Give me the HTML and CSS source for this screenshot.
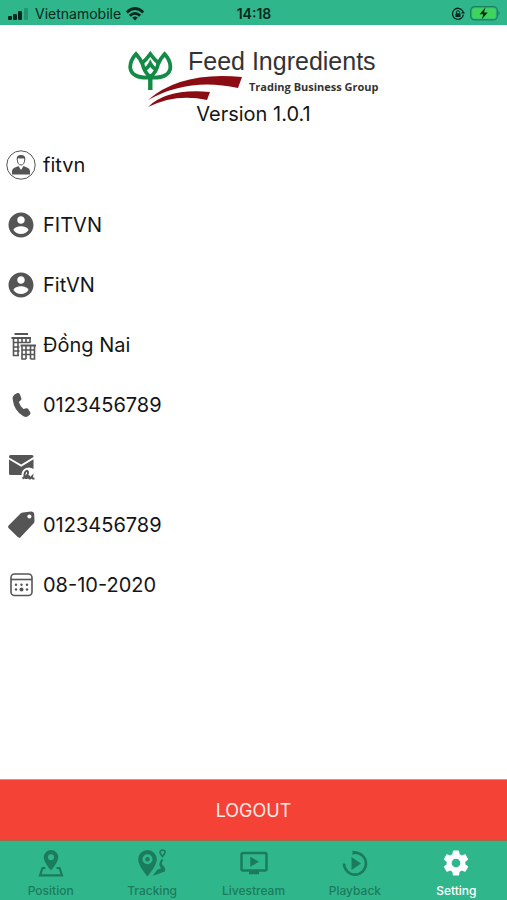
FILE: index.html
```html
<!DOCTYPE html>
<html lang="en">
<head>
  <meta charset="UTF-8" />
  <meta name="viewport" content="width=device-width, initial-scale=1.0"/>
  <title>Setting</title>
  <link rel="stylesheet" href="styles.css">
</head>
<body>

  <!-- Status bar -->
  <header class="status-bar">
    <div class="status-left">
      <svg width="22" height="12" viewBox="0 0 22 12">
        <rect x="0" y="8" width="4" height="4" rx="1"/>
        <rect x="5" y="6" width="4" height="6" rx="1"/>
        <rect x="10" y="3" width="4" height="9" rx="1"/>
        <rect x="16" y="0" width="4" height="12" rx="1" opacity="0.25"/>
      </svg>
      <span>Vietnamobile</span>
      <svg width="18" height="14" viewBox="0 0 18 14">
        <g fill="none" stroke="currentColor" stroke-width="2.8">
          <path d="M0.8 5.4Q9-2.4 17.2 5.4"/>
          <path d="M3.8 8.8Q9 4 14.2 8.8"/>
        </g>
        <path d="M9 13.5L6.2 10.6Q9 8.4 11.8 10.6Z"/>
      </svg>
    </div>
    <time class="clock">14:18</time>
    <div class="status-right">
      <svg width="14" height="14" viewBox="0 0 14 14">
        <path d="M11.6 3.8A5.5 5.5 0 1 0 12.4 7.6" fill="none" stroke="currentColor" stroke-width="1.3"/>
        <path d="M10 6.6h4l-2-3z"/>
        <rect x="4.5" y="6.3" width="5" height="3.8" rx="0.6"/>
        <path d="M5.5 6.5V5.2a1.5 1.5 0 0 1 3 0v1.3" fill="none" stroke="currentColor"/>
      </svg>
      <svg width="30" height="15" viewBox="0 0 30 15">
        <rect x="0.7" y="0.7" width="26.6" height="13.2" rx="4" fill="none" stroke="#1b7f60" stroke-width="1.2"/>
        <rect x="2.2" y="2.2" width="23.6" height="10.2" rx="2.5" fill="#3fd45c"/>
        <path d="M28.4 4.8q2.2 2.5 0 5z" fill="#1b7f60"/>
        <path d="M15.6 1.2L9.6 8.3h3.7l-1.6 5.2 6-7.1H14z"/>
      </svg>
    </div>
  </header>

  <main class="content">
    <div class="brand">
      <svg class="logo" width="252" height="56" viewBox="0 0 252 56" role="img" aria-label="Feed Ingredients Trading Business Group">
        <!-- leaves -->
        <g fill="none" stroke="#138a45" stroke-width="3.8">
          <path d="M22.3 42V26" stroke-width="4.4"/>
          <path d="M22.3 29.5C9 30.5 2.4 26 2.2 19Q2.4 12 8 6Q12.5 11 14.5 16Q16 24 22.3 29"/>
          <path d="M22.3 29.5C35.6 30.5 42.2 26 42.4 19Q42.2 12 36.6 6Q32.1 11 30.1 16Q28.6 24 22.3 29"/>
          <path d="M13.5 15.5Q18 12 22.3 6Q26.6 12 31.1 15.5"/>
          <path d="M15.8 22Q20 20 22.3 15.500Q24.6 20 28.8 22"/>
        </g>
        <!-- swooshes -->
        <path d="M20 52Q53 23 114 29L110 40Q61 29 20 52Z" fill="#8b0c13"/>
        <path d="M20 59Q39 40 82 44L79 52Q48 45 20 59Z" fill="#8b0c13"/>
        <text class="logo-name" x="60" y="22">Feed Ingredients</text>
        <text class="logo-group" x="121" y="43">Trading Business Group</text>
      </svg>
      <p class="version">Version 1.0.1</p>
    </div>

    <ul class="info">
      <li>
        <svg width="30" height="30" viewBox="0 0 30 30">
          <circle cx="15" cy="15" r="14.2" fill="none" stroke="currentColor"/>
          <path d="M6 24.5V21.5Q6 18.5 9 17.5L12.5 16L15 20L17.5 16L21 17.5Q24 18.5 24 21.5V24.5Z"/>
          <path d="M11.3 9.5Q11.3 6 15 6T18.7 9.5Q18.5 15 15 15T11.3 9.5Z" fill="#fff" stroke="currentColor"/>
          <path d="M10.8 10Q10 5 15 5T19.2 10L18 8.3Q14 9 12.2 8z"/>
        </svg>
        <span>fitvn</span>
      </li>
      <li>
        <svg width="30" height="30" viewBox="0 0 24 24">
          <path d="M12 2C6.48 2 2 6.48 2 12s4.48 10 10 10 10-4.48 10-10S17.52 2 12 2zm0 3c1.66 0 3 1.34 3 3s-1.34 3-3 3-3-1.34-3-3 1.34-3 3-3zm0 14.2c-2.5 0-4.71-1.28-6-3.22.03-1.99 4-3.08 6-3.08 1.99 0 5.97 1.09 6 3.08-1.29 1.94-3.5 3.22-6 3.22z"/>
        </svg>
        <span>FITVN</span>
      </li>
      <li>
        <svg width="30" height="30" viewBox="0 0 24 24">
          <path d="M12 2C6.48 2 2 6.48 2 12s4.48 10 10 10 10-4.48 10-10S17.52 2 12 2zm0 3c1.66 0 3 1.34 3 3s-1.34 3-3 3-3-1.34-3-3 1.34-3 3-3zm0 14.2c-2.5 0-4.71-1.28-6-3.22.03-1.99 4-3.08 6-3.08 1.99 0 5.97 1.09 6 3.08-1.29 1.94-3.5 3.22-6 3.22z"/>
        </svg>
        <span>FitVN</span>
      </li>
      <li>
        <svg width="30" height="30" viewBox="0 0 30 30">
          <g fill="none" stroke="currentColor" stroke-width="1.6">
            <path d="M8.5 4H22" stroke-width="2"/>
            <path d="M5.5 8H25" stroke-width="2"/>
            <path d="M7.5 8V25.5H13M12 8V25M16 8V13M20 8V13M24 8V13M7 12.5H24M7 17H13.5M7 21H13.5"/>
            <path d="M14.5 15.5H30" stroke-width="2"/>
            <path d="M16 15.5V29H20M24.5 29H28.5V15.5M20 15.5V29M24.5 15.5V29M16 20H28.5M16 24.5H28.5"/>
          </g>
        </svg>
        <span>Đồng Nai</span>
      </li>
      <li>
        <svg width="30" height="30" viewBox="0 0 30 30">
          <path d="M8.5 4.5L11.5 3Q13 2.5 13.7 4L15.3 8Q15.8 9.3 14.8 10.2L12.8 12Q14 16 17.5 19L20.3 18.2Q21.5 17.9 22.2 19L24.2 22.3Q25 23.7 23.8 24.7L21.5 26.6Q20 27.6 17.5 26.3Q8 21 6.7 9.5Q6.5 6 8.5 4.5Z"/>
        </svg>
        <span>0123456789</span>
      </li>
      <li>
        <svg width="30" height="30" viewBox="0 0 30 30">
          <path d="M3 6.5Q3 5 4.5 5H26Q27.5 5 27.5 6.5V7L15.2 14.5L3 7.5Z"/>
          <path d="M3 9.5L15.2 16.7L27.5 9.3V19Q24 16.5 20 18Q15.5 20 15.5 25H4.5Q3 25 3 23.5Z"/>
          <path d="M16.5 28.5Q22.5 25.5 22 22Q21 19.5 19 22.5Q17.5 26.5 19.5 28Q22 28 23.2 25.5Q22.5 28.8 24 28.5L26 26.5Q25.5 29 28.5 28.5" fill="none" stroke="currentColor" stroke-width="2"/>
        </svg>
        <span></span>
      </li>
      <li>
        <svg width="30" height="30" viewBox="0 0 30 30">
          <path fill-rule="evenodd" d="M17 2.5L25 1.5Q28 1.5 28.2 4L28.5 11Q28.5 12.5 27.5 13.5L14.5 27.2Q13.3 28.3 12 27.3L2.5 18Q1.5 16.8 2.6 15.6L14.5 3.5Q15.7 2.6 17 2.5ZM23.4 4.4A2.1 2.1 0 1 0 23.4 8.6A2.1 2.1 0 1 0 23.4 4.4Z"/>
        </svg>
        <span>0123456789</span>
      </li>
      <li>
        <svg width="30" height="30" viewBox="0 0 30 30">
          <rect x="5" y="4" width="21" height="21.5" rx="3.5" fill="none" stroke="currentColor" stroke-width="1.6"/>
          <path d="M5 9.5H26" stroke="currentColor" stroke-width="1.6"/>
          <circle cx="10" cy="14.7" r="1.2"/>
          <circle cx="15.5" cy="14.7" r="1.2"/>
          <circle cx="21" cy="14.7" r="1.2"/>
          <circle cx="10" cy="19.5" r="1.2"/>
          <circle cx="15.5" cy="19.5" r="2"/>
          <circle cx="21" cy="19.5" r="1.2"/>
        </svg>
        <span>08-10-2020</span>
      </li>
    </ul>
  </main>

  <button class="logout" type="button">LOGOUT</button>

  <!-- Bottom tabs -->
  <nav class="tabs">
    <a href="#position">
      <svg width="30" height="30" viewBox="0 0 30 30">
        <path fill-rule="evenodd" d="M15 2A7.3 7.3 0 0 0 7.7 9.3C7.7 14.5 15 22.5 15 22.5S22.3 14.5 22.3 9.3A7.3 7.3 0 0 0 15 2ZM15 6.3A3 3 0 1 1 15 12.3A3 3 0 1 1 15 6.3Z"/>
        <path d="M9.5 20H6.5L4 27.3H26L23.5 20H20.5" fill="none" stroke="currentColor" stroke-width="2.2"/>
      </svg>
      <span>Position</span>
    </a>
    <a href="#tracking">
      <svg width="30" height="30" viewBox="0 0 30 30">
        <path fill-rule="evenodd" d="M10.5 2A9.3 9.3 0 0 0 1.2 11.3C1.2 18 10.5 28.5 10.5 28.5S19.8 18 19.8 11.3A9.3 9.3 0 0 0 10.5 2ZM10.5 6.3A5 5 0 1 1 10.5 16.3A5 5 0 1 1 10.5 6.3Z"/>
        <circle cx="10.5" cy="11.3" r="2.2"/>
        <path d="M25.5 8.5Q23 5.5 23 4.5A2.5 2.5 0 0 1 28 4.5Q28 5.5 25.5 8.5Z" fill="none" stroke="currentColor" stroke-width="1.7"/>
        <path d="M24.5 11L26.5 12Q23.5 15 26 17.5Q29 20 28 23.5L15.5 28L20.5 21.5L24 20.5Q20.5 16 24.5 11Z"/>
      </svg>
      <span>Tracking</span>
    </a>
    <a href="#livestream">
      <svg width="30" height="30" viewBox="0 0 24 24">
        <path d="M21 3H3c-1.11 0-2 .89-2 2v12c0 1.1.89 2 2 2h5v2h8v-2h5c1.1 0 1.99-.9 1.99-2L23 5c0-1.11-.9-2-2-2zm0 14H3V5h18v12zm-5-6l-7 4V7z"/>
      </svg>
      <span>Livestream</span>
    </a>
    <a href="#playback">
      <svg width="30" height="30" viewBox="0 0 30 30">
        <path d="M13.5 4.6H15A11 11 0 1 1 4 15.6" fill="none" stroke="currentColor" stroke-width="2.6"/>
        <path d="M11.5 9L21 15.6L11.5 22Z"/>
        <path d="M12.5 2.5L18 4.6L12.5 7Z"/>
      </svg>
      <span>Playback</span>
    </a>
    <a href="#setting" class="active">
      <svg width="30" height="30" viewBox="0 0 24 24">
        <path d="M19.43 12.98c.04-.32.07-.64.07-.98s-.03-.66-.07-.98l2.11-1.65c.19-.15.24-.42.12-.64l-2-3.46c-.12-.22-.39-.3-.61-.22l-2.49 1c-.52-.4-1.08-.73-1.69-.98l-.38-2.65C14.46 2.18 14.25 2 14 2h-4c-.25 0-.46.18-.49.42l-.38 2.65c-.61.25-1.17.59-1.69.98l-2.49-1c-.23-.09-.49 0-.61.22l-2 3.46c-.13.22-.07.49.12.64l2.11 1.65c-.04.32-.07.65-.07.98s.03.66.07.98l-2.11 1.65c-.19.15-.24.42-.12.64l2 3.46c.12.22.39.3.61.22l2.49-1c.52.4 1.08.73 1.69.98l.38 2.65c.03.24.24.42.49.42h4c.25 0 .46-.18.49-.42l.38-2.65c.61-.25 1.17-.59 1.69-.98l2.49 1c.23.09.49 0 .61-.22l2-3.46c.12-.22.07-.49-.12-.64l-2.11-1.65zM12 15.5c-1.93 0-3.5-1.57-3.5-3.5s1.57-3.5 3.5-3.5 3.5 1.57 3.5 3.5-1.57 3.5-3.5 3.5z"/>
      </svg>
      <span>Setting</span>
    </a>
  </nav>

</body>
</html>
```
FILE: styles.css
```css
:root {
  --green: #30b68b;
  --green-dark: #1b7c5c;
  --red: #f44336;
  --text: #151515;
  --icon: #555555;
}

* {
  box-sizing: border-box;
}

body {
  margin: 0;
  min-height: 100vh;
  display: flex;
  flex-direction: column;
  font-family: Inter, sans-serif;
  background: #ffffff;
  color: var(--text);
}

svg {
  display: block;
  flex-shrink: 0;
  fill: currentColor;
}

.status-bar {
  display: grid;
  grid-template-columns: 1fr auto 1fr;
  align-items: center;
  height: 25px;
  padding: 2px 7px 0 8px;
  background: var(--green);
  color: #06281d;
  font-size: 14px;
}

.status-left,
.status-right {
  display: flex;
  align-items: center;
  gap: 5px;
}

.status-right {
  justify-content: flex-end;
}

.clock {
  font-weight: 600;
}

.content {
  flex: 1;
}

.brand {
  display: flex;
  flex-direction: column;
  align-items: center;
  padding: 23px 0 11px;
}

.logo {
  overflow: visible;
}

.logo-name {
  font-family: "Liberation Sans", Arial, sans-serif;
  font-size: 25px;
  fill: #333333;
}

.logo-group {
  font-family: "Open Sans", sans-serif;
  font-size: 11px;
  font-weight: 700;
  fill: #333333;
}

.version {
  margin: 0;
  font-size: 20px;
  line-height: 20px;
}

.info {
  list-style: none;
  margin: 0;
  padding: 0 6px;
}

.info li {
  display: flex;
  align-items: center;
  gap: 7px;
  height: 60px;
  font-size: 20px;
}

.info svg {
  color: var(--icon);
}

.logout {
  height: 62px;
  border: none;
  border-top: 1px solid #f08a80;
  border-bottom: 1px solid #9a6a4a;
  background: var(--red);
  color: #ffe9e6;
  font-family: inherit;
  font-size: 18px;
  cursor: pointer;
}

.tabs {
  display: flex;
  height: 59px;
  background: var(--green);
}

.tabs a {
  flex: 1;
  display: flex;
  flex-direction: column;
  align-items: center;
  gap: 4px;
  padding-top: 7px;
  color: var(--green-dark);
  font-size: 12px;
  font-weight: 500;
  line-height: 18px;
  text-decoration: none;
}

.tabs a.active {
  color: #ffffff;
}
```
